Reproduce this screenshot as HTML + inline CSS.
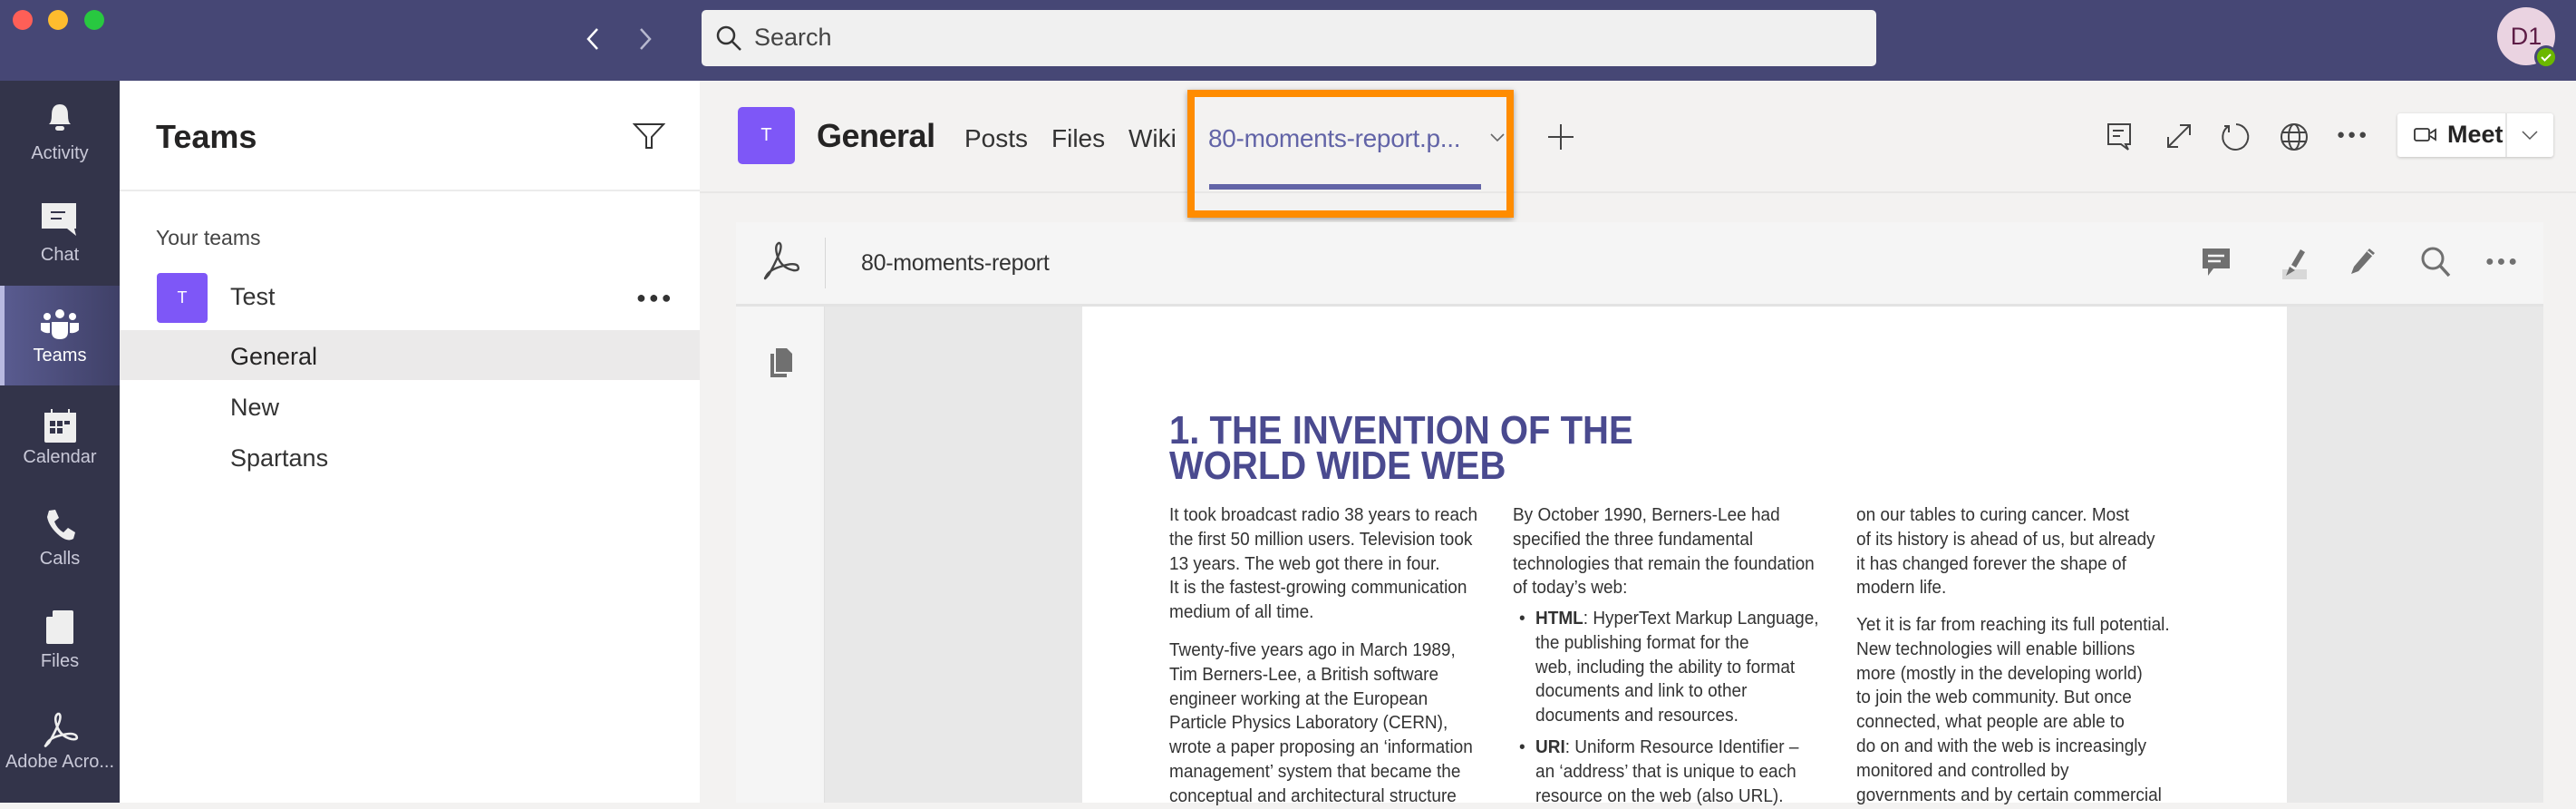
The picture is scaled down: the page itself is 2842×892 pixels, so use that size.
<!DOCTYPE html>
<html><head><meta charset="utf-8"><style>
*{margin:0;padding:0;box-sizing:border-box}
body{width:2842px;height:885px;overflow:hidden;position:relative;font-family:"Liberation Sans",sans-serif;background:#f3f2f1}
.a{position:absolute}
.t{white-space:nowrap}
.rl{color:#c9c9d8;font-size:20px;width:132px;text-align:center;left:0}
.col{position:absolute;font-size:20px;line-height:26.8px;color:#333;white-space:nowrap;transform:scaleX(0.95);transform-origin:0 0}
.col p{margin:0}
.h{position:absolute;left:1290px;font-weight:bold;color:#4a4a8f;font-size:44px;line-height:39px;white-space:nowrap;transform:scaleX(0.91);transform-origin:0 0}
</style></head><body>
<!-- title bar -->
<div class="a" style="left:0;top:0;width:2842px;height:89px;background:#464775"></div>
<div class="a" style="left:14px;top:11px;width:22px;height:22px;border-radius:50%;background:#fe5f57"></div>
<div class="a" style="left:53px;top:11px;width:22px;height:22px;border-radius:50%;background:#febc2e"></div>
<div class="a" style="left:93px;top:11px;width:22px;height:22px;border-radius:50%;background:#28c840"></div>
<svg class="a" style="left:640px;top:28px" width="30" height="30"><path d="M19 4 L9 15 L19 26" fill="none" stroke="#fff" stroke-width="2.5"/></svg>
<svg class="a" style="left:696px;top:28px" width="30" height="30"><path d="M11 4 L21 15 L11 26" fill="none" stroke="#b8b9d0" stroke-width="2.5"/></svg>
<div class="a" style="left:774px;top:11px;width:1296px;height:62px;background:#f0f0f0;border-radius:5px"></div>
<svg class="a" style="left:788px;top:26px" width="32" height="32"><circle cx="13" cy="13" r="9" fill="none" stroke="#333" stroke-width="2.5"/><path d="M20 20 L29 29" stroke="#333" stroke-width="2.5"/></svg>
<div class="a t" style="left:832px;top:26px;font-size:27px;color:#444">Search</div>
<div class="a" style="left:2755px;top:8px;width:64px;height:64px;border-radius:50%;background:#ead3e1;color:#5e1d46;font-size:27px;text-align:center;line-height:64px">D1</div>
<div class="a" style="left:2796px;top:50px;width:26px;height:26px;border-radius:50%;background:#464775"></div>
<div class="a" style="left:2799px;top:53px;width:20px;height:20px;border-radius:50%;background:#6bb700"></div>
<svg class="a" style="left:2799px;top:53px" width="20" height="20"><path d="M5 10 L8.5 13.5 L15 7" fill="none" stroke="#fff" stroke-width="2"/></svg>

<!-- rail -->
<div class="a" style="left:0;top:89px;width:132px;height:796px;background:#33344a"></div>
<div class="a" style="left:0;top:315px;width:132px;height:110px;background:linear-gradient(90deg,#5a5c91,#3f4067)"></div>
<div class="a" style="left:0;top:315px;width:5px;height:110px;background:#b8b9e0"></div>
<svg class="a" style="left:46px;top:110px" width="40" height="40"><path d="M8 27 Q11 25 11 17 Q11 5 20 5 Q29 5 29 17 Q29 25 32 27 Z" fill="#eee"/><rect x="15" y="29" width="10" height="5" rx="2.5" fill="#eee"/></svg>
<div class="a rl" style="top:158px">Activity</div>
<svg class="a" style="left:44px;top:222px" width="44" height="44"><path d="M2 2 H40 V30 H38 L40 38 L30 30 H2 Z" fill="#eee"/><path d="M12 12 H28 M12 19 H24" stroke="#33344a" stroke-width="2"/></svg>
<div class="a rl" style="top:270px">Chat</div>
<svg class="a" style="left:44px;top:340px" width="44" height="40"><circle cx="22" cy="6" r="5" fill="#fff"/><circle cx="8" cy="9" r="4" fill="#fff"/><circle cx="36" cy="9" r="4" fill="#fff"/><path d="M13 15 H31 V26 Q31 34 22 34 Q13 34 13 26 Z" fill="#fff"/><path d="M1 16 H11 V27 Q5 28 1 24 Z M33 16 H43 V24 Q39 28 33 27 Z" fill="#fff"/></svg>
<div class="a rl" style="top:381px;color:#fff">Teams</div>
<svg class="a" style="left:48px;top:450px" width="38" height="40"><path d="M1 5 H36 V36 Q36 38 34 38 H3 Q1 38 1 36 Z" fill="#eee"/><rect x="8" y="1" width="2" height="6" fill="#eee"/><rect x="27" y="1" width="2" height="6" fill="#eee"/><g fill="#33344a"><rect x="7" y="14" width="6" height="6"/><rect x="15" y="14" width="6" height="6"/><rect x="23" y="14" width="6" height="4"/><rect x="7" y="22" width="6" height="6"/><rect x="15" y="22" width="6" height="6"/></g></svg>
<div class="a rl" style="top:493px">Calendar</div>
<svg class="a" style="left:49px;top:560px" width="36" height="40"><path d="M5 3 L12 2 L16 11 L11 15 Q14 23 21 27 L26 22 L34 27 L32 34 Q26 38 17 31 Q5 21 3 10 Z" fill="#eee"/></svg>
<div class="a rl" style="top:605px">Calls</div>
<svg class="a" style="left:50px;top:672px" width="32" height="40"><path d="M9 1 H29 Q31 1 31 3 V36 Q31 38 29 38 H3 Q1 38 1 36 V9 Z" fill="#eee"/><path d="M1 8 L8 1 V8 Z" fill="#33344a"/></svg>
<div class="a rl" style="top:718px">Files</div>
<svg class="a" style="left:44px;top:785px" width="44" height="40"><path d="M20 2 Q15 5 19 16 Q23 27 35 30 Q43 31 40 26 Q36 22 22 26 Q10 29 7 36 Q4 40 10 34 Q16 24 21 12 Q24 4 21 2 Z" fill="none" stroke="#eee" stroke-width="2.6"/></svg>
<div class="a rl" style="top:829px">Adobe Acro...</div>

<!-- teams panel -->
<div class="a" style="left:132px;top:89px;width:640px;height:796px;background:#fff"></div>
<div class="a" style="left:132px;top:209px;width:640px;height:2px;background:#ececec"></div>
<div class="a t" style="left:172px;top:130px;font-size:36px;font-weight:bold;color:#252424">Teams</div>
<svg class="a" style="left:698px;top:134px" width="36" height="32"><path d="M2 3 H34 L21 17 V29 H15 V17 Z" fill="none" stroke="#333" stroke-width="2"/></svg>
<div class="a t" style="left:172px;top:249px;font-size:23px;color:#444">Your teams</div>
<div class="a" style="left:173px;top:301px;width:56px;height:55px;border-radius:4px;background:#7e57f7;color:#fff;font-size:18px;text-align:center;line-height:55px">T</div>
<div class="a t" style="left:254px;top:312px;font-size:27px;color:#333">Test</div>
<div class="a t" style="left:702px;top:318px;font-size:18px;color:#333;letter-spacing:3px">●●●</div>
<div class="a" style="left:132px;top:364px;width:640px;height:55px;background:#ebeaea"></div>
<div class="a t" style="left:254px;top:378px;font-size:27px;color:#252424">General</div>
<div class="a t" style="left:254px;top:434px;font-size:27px;color:#333">New</div>
<div class="a t" style="left:254px;top:490px;font-size:27px;color:#333">Spartans</div>

<!-- main header -->
<div class="a" style="left:772px;top:211px;width:2070px;height:2px;background:#e8e7e6"></div>
<div class="a" style="left:814px;top:118px;width:63px;height:63px;border-radius:5px;background:#7e57f7;color:#fff;font-size:20px;text-align:center;line-height:63px">T</div>
<div class="a t" style="left:901px;top:129px;font-size:36px;font-weight:bold;color:#252424;letter-spacing:-0.5px">General</div>
<div class="a t" style="left:1064px;top:137px;font-size:28px;color:#333">Posts</div>
<div class="a t" style="left:1160px;top:137px;font-size:28px;color:#333">Files</div>
<div class="a t" style="left:1245px;top:137px;font-size:28px;color:#333">Wiki</div>
<div class="a t" style="left:1333px;top:137px;font-size:28px;color:#6264a7;letter-spacing:-0.3px">80-moments-report.p...</div>
<svg class="a" style="left:1643px;top:145px" width="18" height="14"><path d="M2 3 L9 10 L16 3" fill="none" stroke="#666" stroke-width="1.6"/></svg>
<div class="a" style="left:1334px;top:203px;width:300px;height:6px;background:#6264a7"></div>
<div class="a" style="left:1310px;top:99px;width:360px;height:141px;border:8px solid #ff8c00;box-shadow:0 2px 6px rgba(0,0,0,.35)"></div>
<svg class="a" style="left:1706px;top:135px" width="32" height="32"><path d="M16 2 V30 M2 16 H30" stroke="#444" stroke-width="2"/></svg>
<svg class="a" style="left:2324px;top:134px" width="30" height="34"><path d="M2 3 H26 V25 H21 L24 31 L16 25 H2 Z" fill="none" stroke="#444" stroke-width="2"/><path d="M7 10 H19 M7 16 H15" stroke="#444" stroke-width="2"/></svg>
<svg class="a" style="left:2388px;top:134px" width="32" height="32"><path d="M4 28 L28 4 M17 4 H28 V15 M4 17 V28 H15" fill="none" stroke="#444" stroke-width="2"/></svg>
<svg class="a" style="left:2450px;top:134px" width="34" height="34"><path d="M9 5 A14 14 0 1 0 17 3" fill="none" stroke="#444" stroke-width="2"/><path d="M9 5 V12 M4 5 H10" stroke="#444" stroke-width="2"/></svg>
<svg class="a" style="left:2514px;top:134px" width="34" height="34"><circle cx="17" cy="17" r="14" fill="none" stroke="#444" stroke-width="2"/><ellipse cx="17" cy="17" rx="6" ry="14" fill="none" stroke="#444" stroke-width="2"/><path d="M3 12 H31 M3 22 H31" stroke="#444" stroke-width="2"/></svg>
<div class="a t" style="left:2578px;top:140px;font-size:15px;color:#444;letter-spacing:3px">●●●</div>
<div class="a" style="left:2645px;top:125px;width:172px;height:48px;background:#fff;border-radius:3px;box-shadow:0 1px 3px rgba(0,0,0,.2)"></div>
<div class="a" style="left:2764px;top:125px;width:2px;height:48px;background:#e6e6e6"></div>
<svg class="a" style="left:2662px;top:136px" width="28" height="26"><rect x="2" y="6" width="16" height="13" rx="2" fill="none" stroke="#333" stroke-width="1.8"/><path d="M19 11 L25 7 V18 L19 14" fill="none" stroke="#333" stroke-width="1.8"/></svg>
<div class="a t" style="left:2700px;top:133px;font-size:27px;color:#252424;font-weight:bold">Meet</div>
<svg class="a" style="left:2781px;top:142px" width="20" height="14"><path d="M2 3 L10 11 L18 3" fill="none" stroke="#555" stroke-width="1.5"/></svg>

<!-- pdf viewer -->
<div class="a" style="left:812px;top:245px;width:1994px;height:92px;background:#f5f5f5"></div>
<div class="a" style="left:812px;top:335px;width:1994px;height:3px;background:#e3e3e3"></div>
<div class="a" style="left:812px;top:338px;width:98px;height:547px;background:#f5f5f5"></div>
<div class="a" style="left:909px;top:338px;width:1px;height:547px;background:#e0e0e0"></div>
<div class="a" style="left:910px;top:338px;width:1896px;height:547px;background:#e8e8e8"></div>
<div class="a" style="left:910px;top:262px;width:1px;height:56px;background:#d6d6d6"></div>
<svg class="a" style="left:838px;top:265px" width="46" height="48"><path d="M21 3 Q16 6 20 18 Q24 30 37 33 Q45 34 42 28 Q38 24 23 29 Q10 33 7 40 Q4 45 10 38 Q16 28 22 14 Q25 5 22 3 Z" fill="none" stroke="#444" stroke-width="2.4"/></svg>
<div class="a t" style="left:950px;top:276px;font-size:25px;color:#333;letter-spacing:-0.3px">80-moments-report</div>
<svg class="a" style="left:2428px;top:272px" width="34" height="36"><path d="M2 2 H32 V24 H14 L8 32 V24 H2 Z" fill="#707070"/><path d="M8 10 H26 M8 16 H22" stroke="#f5f5f5" stroke-width="2.4"/></svg>
<svg class="a" style="left:2508px;top:270px" width="38" height="38"><rect x="10" y="27" width="27" height="11" fill="#d8d8d8"/><path d="M20 22 L30 5 L35 8 L25 25 Z M18 24 L24 28 L14 34 Z" fill="#707070"/></svg>
<svg class="a" style="left:2590px;top:270px" width="34" height="36"><path d="M4 32 L7 24 L24 4 L30 9 L12 29 Z" fill="#707070"/><path d="M22 7 L28 12" stroke="#f5f5f5" stroke-width="1.5"/></svg>
<svg class="a" style="left:2669px;top:270px" width="36" height="38"><circle cx="15" cy="15" r="11" fill="none" stroke="#707070" stroke-width="3"/><path d="M23 23 L33 34" stroke="#707070" stroke-width="3.5"/></svg>
<div class="a t" style="left:2742px;top:280px;font-size:16px;color:#707070;letter-spacing:3px">●●●</div>
<svg class="a" style="left:846px;top:382px" width="30" height="36"><path d="M10 2 H22 L28 8 V28 H10 Z" fill="#707070"/><path d="M4 8 H8 V30 H22 V34 H4 Z" fill="#707070"/></svg>

<!-- page -->
<div class="a" style="left:1194px;top:338px;width:1329px;height:547px;background:#fff"></div>
<div class="h" style="top:455px">1. THE INVENTION OF THE</div>
<div class="h" style="top:494px">WORLD WIDE WEB</div>

<div class="col" style="left:1290px;top:555px">It took broadcast radio 38 years to reach<br>the first 50 million users. Television took<br>13 years. The web got there in four.<br>It is the fastest-growing communication<br>medium of all time.</div>
<div class="col" style="left:1290px;top:704px">Twenty-five years ago in March 1989,<br>Tim Berners-Lee, a British software<br>engineer working at the European<br>Particle Physics Laboratory (CERN),<br>wrote a paper proposing an ‘information<br>management’ system that became the<br>conceptual and architectural structure</div>

<div class="col" style="left:1669px;top:555px">By October 1990, Berners-Lee had<br>specified the three fundamental<br>technologies that remain the foundation<br>of today’s web:</div>
<div class="col" style="left:1676px;top:669px">•</div>
<div class="col" style="left:1694px;top:669px"><b>HTML</b>: HyperText Markup Language,<br>the publishing format for the<br>web, including the ability to format<br>documents and link to other<br>documents and resources.</div>
<div class="col" style="left:1676px;top:811px">•</div>
<div class="col" style="left:1694px;top:811px"><b>URI</b>: Uniform Resource Identifier –<br>an ‘address’ that is unique to each<br>resource on the web (also URL).</div>

<div class="col" style="left:2048px;top:555px">on our tables to curing cancer. Most<br>of its history is ahead of us, but already<br>it has changed forever the shape of<br>modern life.</div>
<div class="col" style="left:2048px;top:676px">Yet it is far from reaching its full potential.<br>New technologies will enable billions<br>more (mostly in the developing world)<br>to join the web community. But once<br>connected, what people are able to<br>do on and with the web is increasingly<br>monitored and controlled by<br>governments and by certain commercial</div>
</body></html>
